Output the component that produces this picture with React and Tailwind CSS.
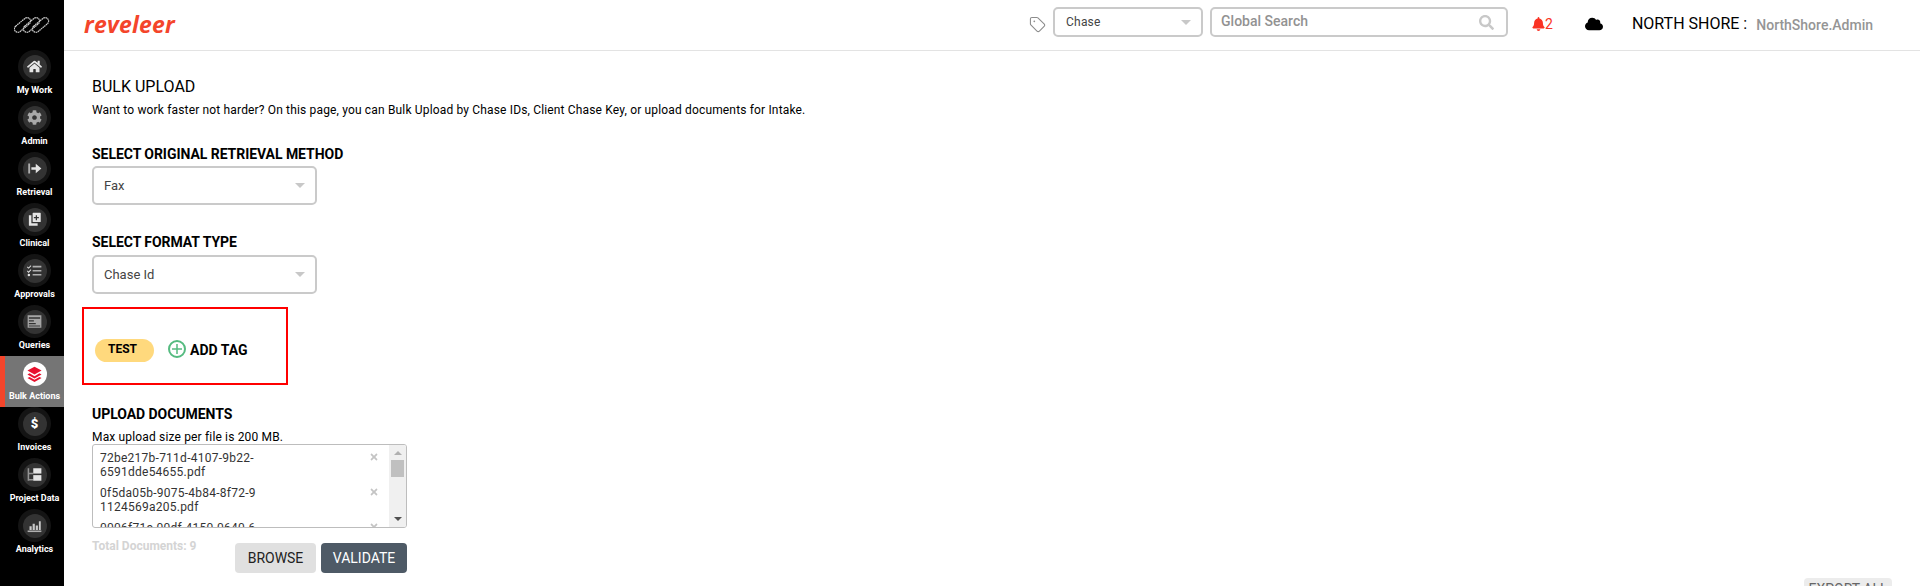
import React from "react";
import { Tag } from "lucide-react";
import { FaHome, FaCog, FaSearch, FaBell, FaCloud, FaTimes } from "react-icons/fa";

const I = ({ children }) => (
  <svg viewBox="0 0 24 24" fill="currentColor">{children}</svg>
);

const icons = {
  home: <FaHome className="text-[#e6e6e6]" />,
  gear: <FaCog className="text-[#a8a8a8]" />,
  retrieval: <I><path d="M2 4h3v16H2z" opacity=".7" /><path d="M7 10h7V4.500L23 12l-9 7.500V14H7z" /></I>,
  clinical: <I><path fillRule="evenodd" d="M10 1h11a1 1 0 0 1 1 1v13a1 1 0 0 1-1 1H10a1 1 0 0 1-1-1V2a1 1 0 0 1 1-1zm4 4v3h-3v2h3v3h2v-3h3V8h-3V5z" /><path d="M3 5h4v13h10v4H4a1 1 0 0 1-1-1z" /></I>,
  approvals: <I><path d="M9 4.500h14V7H9zM9 11h14v2.500H9zM9 17.500h14V20H9z" opacity=".7" /><path d="m1 5.500 1.500 1.500L6 3.500 7 4.700 2.500 9.300 0 6.700zM1 12l1.500 1.500L6 10l1 1.200-4.500 4.600L0 13.200z" /><circle cx="3" cy="19" r="2" /></I>,
  queries: <I><path fillRule="evenodd" d="M1 2h22v20H1zm2 3v2.500h18V5zm0 5v2h8v-2zm0 4.500v2h11v-2zM3 18.500V20h18v-1.500z" opacity=".65" /></I>,
  stack: <I><path d="m12 1 10 5.500L12 12 2 6.500z" /><path d="m2 12 3-1.600L12 14.300l7-3.900 3 1.600-10 5.500z" /><path d="m2 17 3-1.600L12 19.300l7-3.900 3 1.600-10 5.500z" /></I>,
  project: <I><path d="M1 2h2.500v20H1zM3.500 9H10v2.500H3.500zM3.500 19H10v2.500H3.500z" opacity=".55" /><path d="M10 2h13v8.500H10z" /><path d="M10 13h13v9H10z" /></I>,
  analytics: <I><path d="M1 20h22v2.500H1z" opacity=".7" /><path d="M4 13h3.500v6H4zM9 9h3.500v10H9zM14 12h3.500v7H14zM19 5h3v14h-3z" opacity=".85" /></I>,
};

const nav = [
  ["My Work", icons.home],
  ["Admin", icons.gear],
  ["Retrieval", icons.retrieval],
  ["Clinical", icons.clinical],
  ["Approvals", icons.approvals],
  ["Queries", icons.queries],
  ["Bulk Actions", icons.stack, true],
  ["Invoices", <span className="text-[13px] font-black leading-none text-white">$</span>],
  ["Project Data", icons.project],
  ["Analytics", icons.analytics],
];

const Caret = () => (
  <span className="w-0 h-0 border-x-[5px] border-x-transparent border-t-[5px] border-t-[#c8c8c8]" />
);

const Select = ({ label, className }) => (
  <div className={`flex items-center justify-between border-2 border-[#cacaca] rounded-[5px] bg-white text-[#444] ${className}`}>
    <span>{label}</span>
    <Caret />
  </div>
);

const Label = ({ children }) => (
  <div className="text-[14px] leading-[16px] font-bold text-black tracking-[-0.05px]">{children}</div>
);

const files = [
  ["72be217b-711d-4107-9b22-", "6591dde54655.pdf"],
  ["0f5da05b-9075-4b84-8f72-9", "1124569a205.pdf"],
  ["0006f71c-00df-4150-0640-6"],
];

export default function App() {
  return (
    <div className="flex w-full h-[586px] overflow-hidden bg-white text-black font-['Roboto',sans-serif]">
      <aside className="w-[64px] shrink-0 bg-black flex flex-col text-white">
        <div className="h-[50px] flex items-center justify-center">
          <svg width="36" height="18" viewBox="0 0 36 18" fill="none" stroke="#cfcfcf" strokeWidth="1.200" strokeDasharray="1.600 0.500">
            <rect x="-1" y="5.500" width="19" height="7" rx="3.500" transform="rotate(-40 8.500 9)" />
            <rect x="8" y="5.500" width="19" height="7" rx="3.500" transform="rotate(-40 17.500 9)" />
            <rect x="17" y="5.500" width="19" height="7" rx="3.500" transform="rotate(-40 26.500 9)" />
          </svg>
        </div>
        {nav.map(([label, icon, active]) => (
          <div
            key={label}
            className={`relative h-[51px] flex flex-col items-center pl-[5px] ${active ? "bg-[#757575]" : ""}`}
          >
            {active && <span className="absolute left-0 top-0 bottom-0 w-[5px] bg-[#f4452b]" />}
            {active ? (
              <div className="w-[24px] h-[24px] mt-[6px] mb-[3px] rounded-full bg-white text-[#e8112d] flex items-center justify-center [&>svg]:w-[17px] [&>svg]:h-[17px]">
                {icon}
              </div>
            ) : (
              <div className="w-[33px] h-[33px] rounded-full bg-[#141414] flex items-center justify-center">
                <div className="w-[24px] h-[24px] rounded-full bg-[#333333] text-[#e4e4e4] flex items-center justify-center [&>svg]:w-[15px] [&>svg]:h-[15px]">
                  {icon}
                </div>
              </div>
            )}
            <span className="text-[9px] leading-[12px] font-bold whitespace-nowrap mt-[1px]">{label}</span>
          </div>
        ))}
      </aside>

      <div className="flex-1 min-w-0 flex flex-col">
        <header className="h-[51px] shrink-0 border-b border-[#e3e3e3] flex items-center">
          <span className="ml-[20px] text-[#f4452b] text-[23px] leading-none font-bold italic font-['Open_Sans',sans-serif] tracking-[0.2px] mb-[2px]">reveleer</span>
          <div className="ml-auto flex items-center">
            <Tag className="w-[17px] h-[17px] text-[#8c8c8c] -mt-[2px]" strokeWidth={1.500} />
            <Select label="Chase" className="ml-[7px] w-[150px] h-[30px] pl-[11px] pr-[10px] text-[12px] tracking-[0.2px] -mt-[6px]" />
            <div className="ml-[7px] w-[298px] h-[30px] border-2 border-[#cacaca] rounded-[5px] flex items-center justify-between pl-[9px] pr-[12px] -mt-[6px]">
              <span className="text-[14px] font-medium text-[#929292] -mt-[2px]">Global Search</span>
              <FaSearch className="w-[15px] h-[15px] text-[#c8c8c8]" />
            </div>
            <FaBell className="ml-[24px] w-[13px] h-[14px] text-[#fa3324] -mt-[2px]" />
            <span className="text-[#fa3324] text-[14px] leading-none -mt-[2px]">2</span>
            <FaCloud className="ml-[32px] w-[18px] h-[18px] text-black -mt-[2px]" />
            <span className="ml-[29px] text-[16px] leading-none -mt-[2px]">NORTH SHORE :</span>
            <span className="ml-[9px] text-[14px] leading-none font-medium text-[#959595] mr-[47px]">NorthShore.Admin</span>
          </div>
        </header>

        <main className="relative flex-1 pl-[28px]">
          <h1 className="mt-[26px] text-[16px] leading-[19px] font-normal">BULK UPLOAD</h1>
          <p className="mt-[7px] text-[12px] leading-[14px] tracking-[0.16px]">
            Want to work faster not harder? On this page, you can Bulk Upload by Chase IDs, Client Chase Key, or upload documents for Intake.
          </p>

          <div className="mt-[29px]"><Label>SELECT ORIGINAL RETRIEVAL METHOD</Label></div>
          <Select label="Fax" className="mt-[4px] w-[225px] h-[39px] pl-[10px] pr-[10px] text-[13px]" />

          <div className="mt-[29px]"><Label>SELECT FORMAT TYPE</Label></div>
          <Select label="Chase Id" className="mt-[5px] w-[225px] h-[39px] pl-[10px] pr-[10px] text-[13px]" />

          <div className="-ml-[10px] mt-[13px] w-[206px] h-[78px] border-2 border-[#ff0000] flex items-start pt-[30px] pl-[11px]">
            <span className="w-[59px] h-[23px] rounded-full bg-[#ffd97d] flex items-center justify-center text-[12px] font-bold pb-[3px] pr-[4px]">TEST</span>
            <span className="ml-[14px] w-[18px] h-[18px] mt-[1px] rounded-full border-2 border-[#55bb80] flex items-center justify-center">
              <svg width="10" height="10" viewBox="0 0 10 10" stroke="#55bb80" strokeWidth="1.500"><path d="M5 0v10M0 5h10" /></svg>
            </span>
            <span className="ml-[4px] mt-[3px] text-[14px] leading-[16px] font-bold">ADD TAG</span>
          </div>

          <div className="mt-[21px]"><Label>UPLOAD DOCUMENTS</Label></div>
          <p className="mt-[8px] text-[12px] leading-[14px] tracking-[0.16px]">Max upload size per file is 200 MB.</p>

          <div className="w-[315px] h-[84px] border border-[#bdbdbd] rounded-[3px] flex overflow-hidden">
            <div className="flex-1 min-w-0 overflow-hidden pt-[6px]">
              {files.map((lines, i) => (
                <div key={i} className="relative h-[35px] pl-[7px] text-[12px] leading-[14px] tracking-[0.25px] text-[#333]">
                  {lines.map((l) => (
                    <div key={l}>{l}</div>
                  ))}
                  <FaTimes className="absolute right-[10px] top-[1px] w-[10px] h-[10px] text-[#c4c4c4]" />
                </div>
              ))}
            </div>
            <div className="w-[17px] shrink-0 bg-[#f0f0f0] flex flex-col items-center justify-between py-[6px]">
              <div className="flex flex-col items-center w-full">
                <span className="w-0 h-0 border-x-[4px] border-x-transparent border-b-[4px] border-b-[#b0b0b0]" />
                <span className="mt-[5px] w-[13px] h-[17px] bg-[#c0c0c0]" />
              </div>
              <span className="w-0 h-0 border-x-[4px] border-x-transparent border-t-[4px] border-t-[#505050]" />
            </div>
          </div>

          <div className="w-[315px] flex justify-between items-start">
            <span className="mt-[11px] text-[12px] leading-[14px] font-bold text-[#d4d4d4]">Total Documents: 9</span>
            <div className="flex gap-[5px] mt-[15px]">
              <button className="w-[81px] h-[30px] rounded-[4px] bg-[#e0e0e0] text-[14px] text-[#222]">BROWSE</button>
              <button className="w-[86px] h-[30px] rounded-[4px] bg-[#4e5a66] text-[14px] text-white">VALIDATE</button>
            </div>
          </div>

          <button className="absolute right-[28px] top-[527px] w-[88px] h-[30px] rounded-[4px] bg-[#ececec] text-[14px] leading-[16px] text-[#666] flex justify-center items-start pt-[3px]">EXPORT ALL</button>
        </main>
      </div>
    </div>
  );
}
